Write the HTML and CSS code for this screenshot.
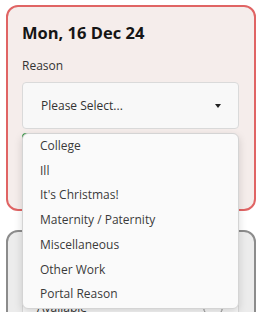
FILE: index.html
```html
<!DOCTYPE html>
<html lang="en">
<head>
  <meta charset="UTF-8" />
  <title>Leave Days</title>
  <link rel="stylesheet" href="styles.css">
</head>
<body>
  <div class="days">
    <div class="day-card active">
      <h2 class="day-title">Mon, 16 Dec 24</h2>
      <label class="field-label">Reason</label>
      <div class="select-wrap">
        <div class="select">
          <span>Please Select...</span>
          <span class="caret"></span>
        </div>
        <ul class="dropdown">
          <li>College</li>
          <li>Ill</li>
          <li>It's Christmas!</li>
          <li>Maternity / Paternity</li>
          <li>Miscellaneous</li>
          <li>Other Work</li>
          <li>Portal Reason</li>
        </ul>
      </div>
      <div class="save-btn"></div>
    </div>

    <div class="day-card">
      <div class="mark"></div>
      <div class="select status">
        <span>Available</span>
        <span class="circle"></span>
      </div>
    </div>
  </div>
</body>
</html>
```

FILE: styles.css
```css
* {
  margin: 0;
  padding: 0;
  box-sizing: border-box;
}

body {
  font-family: "Open Sans", "DejaVu Sans", sans-serif;
  background: #fff;
  color: #222;
  height: 312px;
  overflow: hidden;
}

.days {
  padding: 5px 12px 0 6px;
  display: flex;
  flex-direction: column;
  gap: 19px;
}

.day-card {
  border: 2px solid #8c8c8c;
  border-radius: 12px;
  background: #ececec;
  padding: 10px 15px 30px 14px;
}

.day-card.active {
  border-color: #e06464;
  background: #f5edeb;
  padding-top: 14px;
  padding-bottom: 34px;
}

.day-title {
  font-size: 16.5px;
  font-weight: 700;
  line-height: 24px;
  color: #151515;
}

.field-label {
  display: block;
  margin-top: 13px;
  font-size: 12px;
  line-height: 16px;
  color: #333;
}

.select-wrap {
  position: relative;
  margin-top: 8px;
}

.select {
  display: flex;
  justify-content: space-between;
  align-items: center;
  height: 47px;
  padding: 0 16px 0 18px;
  background: #f8f8f8;
  border: 1px solid #dadada;
  border-radius: 4px;
  font-size: 12px;
  color: #333;
}

.caret {
  width: 0;
  height: 0;
  border-left: 3px solid transparent;
  border-right: 3px solid transparent;
  border-top: 4px solid #222;
  margin-right: 1px;
}

.dropdown {
  position: absolute;
  top: 51px;
  left: 0;
  right: 0;
  list-style: none;
  background: #fafafa;
  border: 1px solid #d4d4d4;
  border-radius: 6px;
  box-shadow: 0 3px 8px rgba(0, 0, 0, 0.15);
  padding: 0 0 1px;
  z-index: 10;
}

.dropdown li {
  font-size: 12px;
  line-height: 24.7px;
  padding-left: 17px;
  color: #3a3a3a;
}

.save-btn {
  margin-top: 4px;
  height: 42px;
  width: 120px;
  border: 2px solid #3d9a4a;
  border-radius: 4px;
  background: #fff;
}

.mark {
  width: 2px;
  height: 4px;
  background: #d9822b;
}

.select.status {
  margin-top: 36px;
  height: 50px;
  padding: 0 15px 0 14px;
}

.circle {
  width: 20px;
  height: 20px;
  border: 1px solid #888;
  border-radius: 50%;
}
```
